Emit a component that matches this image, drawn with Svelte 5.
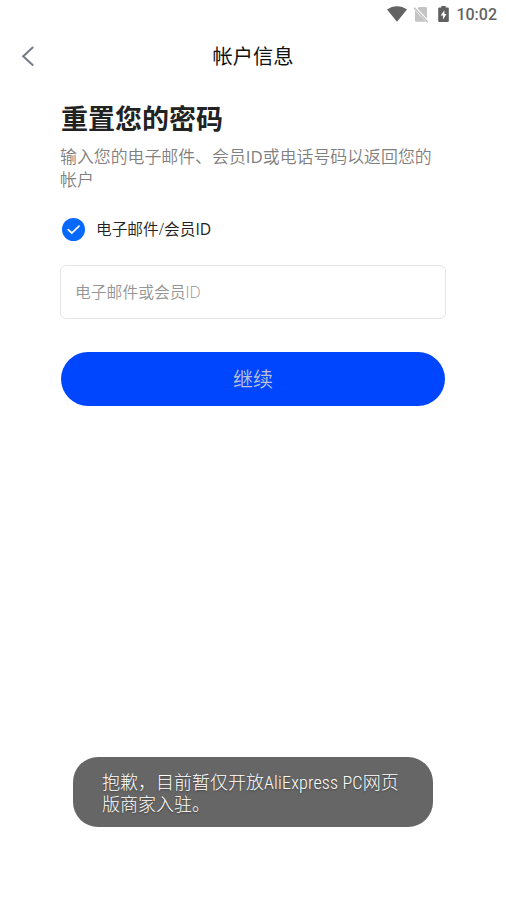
<script>
  import { onMount } from 'svelte';

  let account = '';
  let selected = true;

  onMount(() => {
    document.title = '帐户信息';
  });
</script>

<div class="screen">
  <div class="status">
    <svg class="wifi" viewBox="0 0 20 16" width="20" height="16">
      <path d="M0 3.5C6 -1 14 -1 20 3.5L10 15.7Z" fill="#636363" />
    </svg>
    <svg class="sim" viewBox="0 0 16 17" width="16" height="17">
      <path d="M5.8 1H12.8Q14 1 14 2.2V13.2L3.9 2.9ZM2 4.6L13 15.8H3.2Q2 15.8 2 14.6Z" fill="#c4c4c4" />
      <path d="M2.2 1.2L15 14.4" stroke="#fff" stroke-width="1.3" />
      <path d="M1 1.8L14.8 16" stroke="#bdbdbd" stroke-width="1.4" />
    </svg>
    <svg class="battery" viewBox="0 0 11 16" width="11" height="16">
      <path d="M3.3 0H7.7V1.6H9.8Q10.8 1.6 10.8 2.6V15Q10.8 16 9.8 16H1.2Q.2 16 .2 15V2.6Q.2 1.6 1.2 1.6H3.3Z" fill="#606060" />
      <path d="M6.4 4.2L2.7 9.5H5V13.5L8.5 8H6.4Z" fill="#fff" />
    </svg>
    <span class="time">10:02</span>
  </div>

  <header>
    <button class="back" aria-label="返回">
      <svg viewBox="0 0 14 22" width="14" height="22">
        <path d="M12.2 2L2.2 11.2L12.2 20.4" fill="none" stroke="#737b89" stroke-width="2" />
      </svg>
    </button>
    <span class="heading">帐户信息</span>
  </header>

  <main>
    <h1>重置您的密码</h1>
    <p class="hint">输入您的电子邮件、会员<span class="id">ID</span>或电话号码以返回您的<br />帐户</p>

    <button class="option" on:click={() => (selected = !selected)}>
      <span class="radio" class:selected>
        {#if selected}
          <svg viewBox="0 0 23 23" width="23" height="23">
            <path d="M6.2 11.7L9.8 15L17 8.2" fill="none" stroke="#fff" stroke-width="1.7" stroke-linecap="round" />
          </svg>
        {/if}
      </span>
      <span>电子邮件/会员<span class="id">ID</span></span>
    </button>

    <input type="text" placeholder="电子邮件或会员ID" bind:value={account} />
    <button class="submit">继续</button>
  </main>

  <div class="toast">抱歉，目前暂仅开放<span class="latin">AliExpress PC</span>网页<br />版商家入驻。</div>
</div>

<style>
  :global(body) {
    background: #fff;
  }

  .screen {
    display: flex;
    flex-direction: column;
    width: 506px;
    height: 899px;
    box-sizing: border-box;
    padding-bottom: 72px;
    overflow: hidden;
    font-family: "Open Sans", "Noto Sans CJK SC", sans-serif;
    font-weight: 350;
  }

  button {
    border: none;
    padding: 0;
    background: none;
    font: inherit;
    cursor: pointer;
  }

  svg {
    display: block;
  }

  .status {
    display: flex;
    align-items: center;
    justify-content: flex-end;
    height: 28px;
    padding-right: 9px;
  }

  .wifi {
    margin-top: -1px;
  }

  .sim {
    margin-left: 6px;
  }

  .battery {
    margin-left: 9px;
    margin-top: -1px;
  }

  .time {
    margin-left: 7px;
    padding-top: 1px;
    color: #636363;
    font: 500 16px/28px Roboto, sans-serif;
  }

  header {
    display: grid;
    grid-template-columns: 60px 1fr 60px;
    align-items: center;
    height: 56px;
  }

  .back {
    margin-left: 21px;
    justify-self: start;
  }

  .heading {
    padding-bottom: 1px;
    text-align: center;
    color: #111;
    font-size: 20.2px;
    font-weight: 400;
    font-family: "Noto Sans CJK SC", sans-serif;
  }

  main {
    display: flex;
    flex-direction: column;
    padding: 16px 60px 0;
  }

  h1 {
    margin: 0 0 0 1px;
    color: #222;
    font: 700 27px/36px "Noto Sans CJK SC", sans-serif;
  }

  .hint {
    margin: 9px 0 0;
    color: #808080;
    font-size: 16.9px;
    line-height: 23px;
  }

  .id {
    font-weight: 400;
  }

  .option {
    display: flex;
    align-items: center;
    height: 24px;
    margin-top: 26px;
    padding-left: 2px;
    color: #222;
    font-size: 15.7px;
    line-height: 24px;
  }

  .radio {
    width: 23px;
    height: 23px;
    margin-right: 11px;
    border-radius: 50%;
    box-shadow: inset 0 0 0 1px #ccc;
  }

  .radio.selected {
    background: #0569ff;
    box-shadow: none;
  }

  input {
    box-sizing: border-box;
    width: 386px;
    height: 54px;
    margin-top: 24px;
    padding: 0 14px;
    border: 1px solid #e5e5e5;
    border-radius: 6px;
    outline: none;
    color: #222;
    font: inherit;
    font-size: 15.8px;
  }

  input::placeholder {
    color: #959595;
    opacity: 1;
  }

  .submit {
    width: 384px;
    height: 54px;
    margin: 33px 0 0 1px;
    padding-bottom: 2px;
    border-radius: 27px;
    background: #0046ff;
    color: #bdc3d2;
    font-size: 20px;
  }

  .toast {
    box-sizing: border-box;
    width: 360px;
    height: 70px;
    margin: auto auto 0;
    padding: 15px 29px 0;
    border-radius: 25px;
    background: #666;
    color: #fff;
    font-family: "Roboto Condensed", Roboto, "Noto Sans CJK SC", sans-serif;
    font-size: 18px;
    font-stretch: 75%;
    font-weight: 300;
    line-height: 21.5px;
    text-shadow: 0 1px 2px rgba(0, 0, 0, 0.4);
  }

  .latin {
    font-weight: 350;
    letter-spacing: 0.17px;
  }
</style>
